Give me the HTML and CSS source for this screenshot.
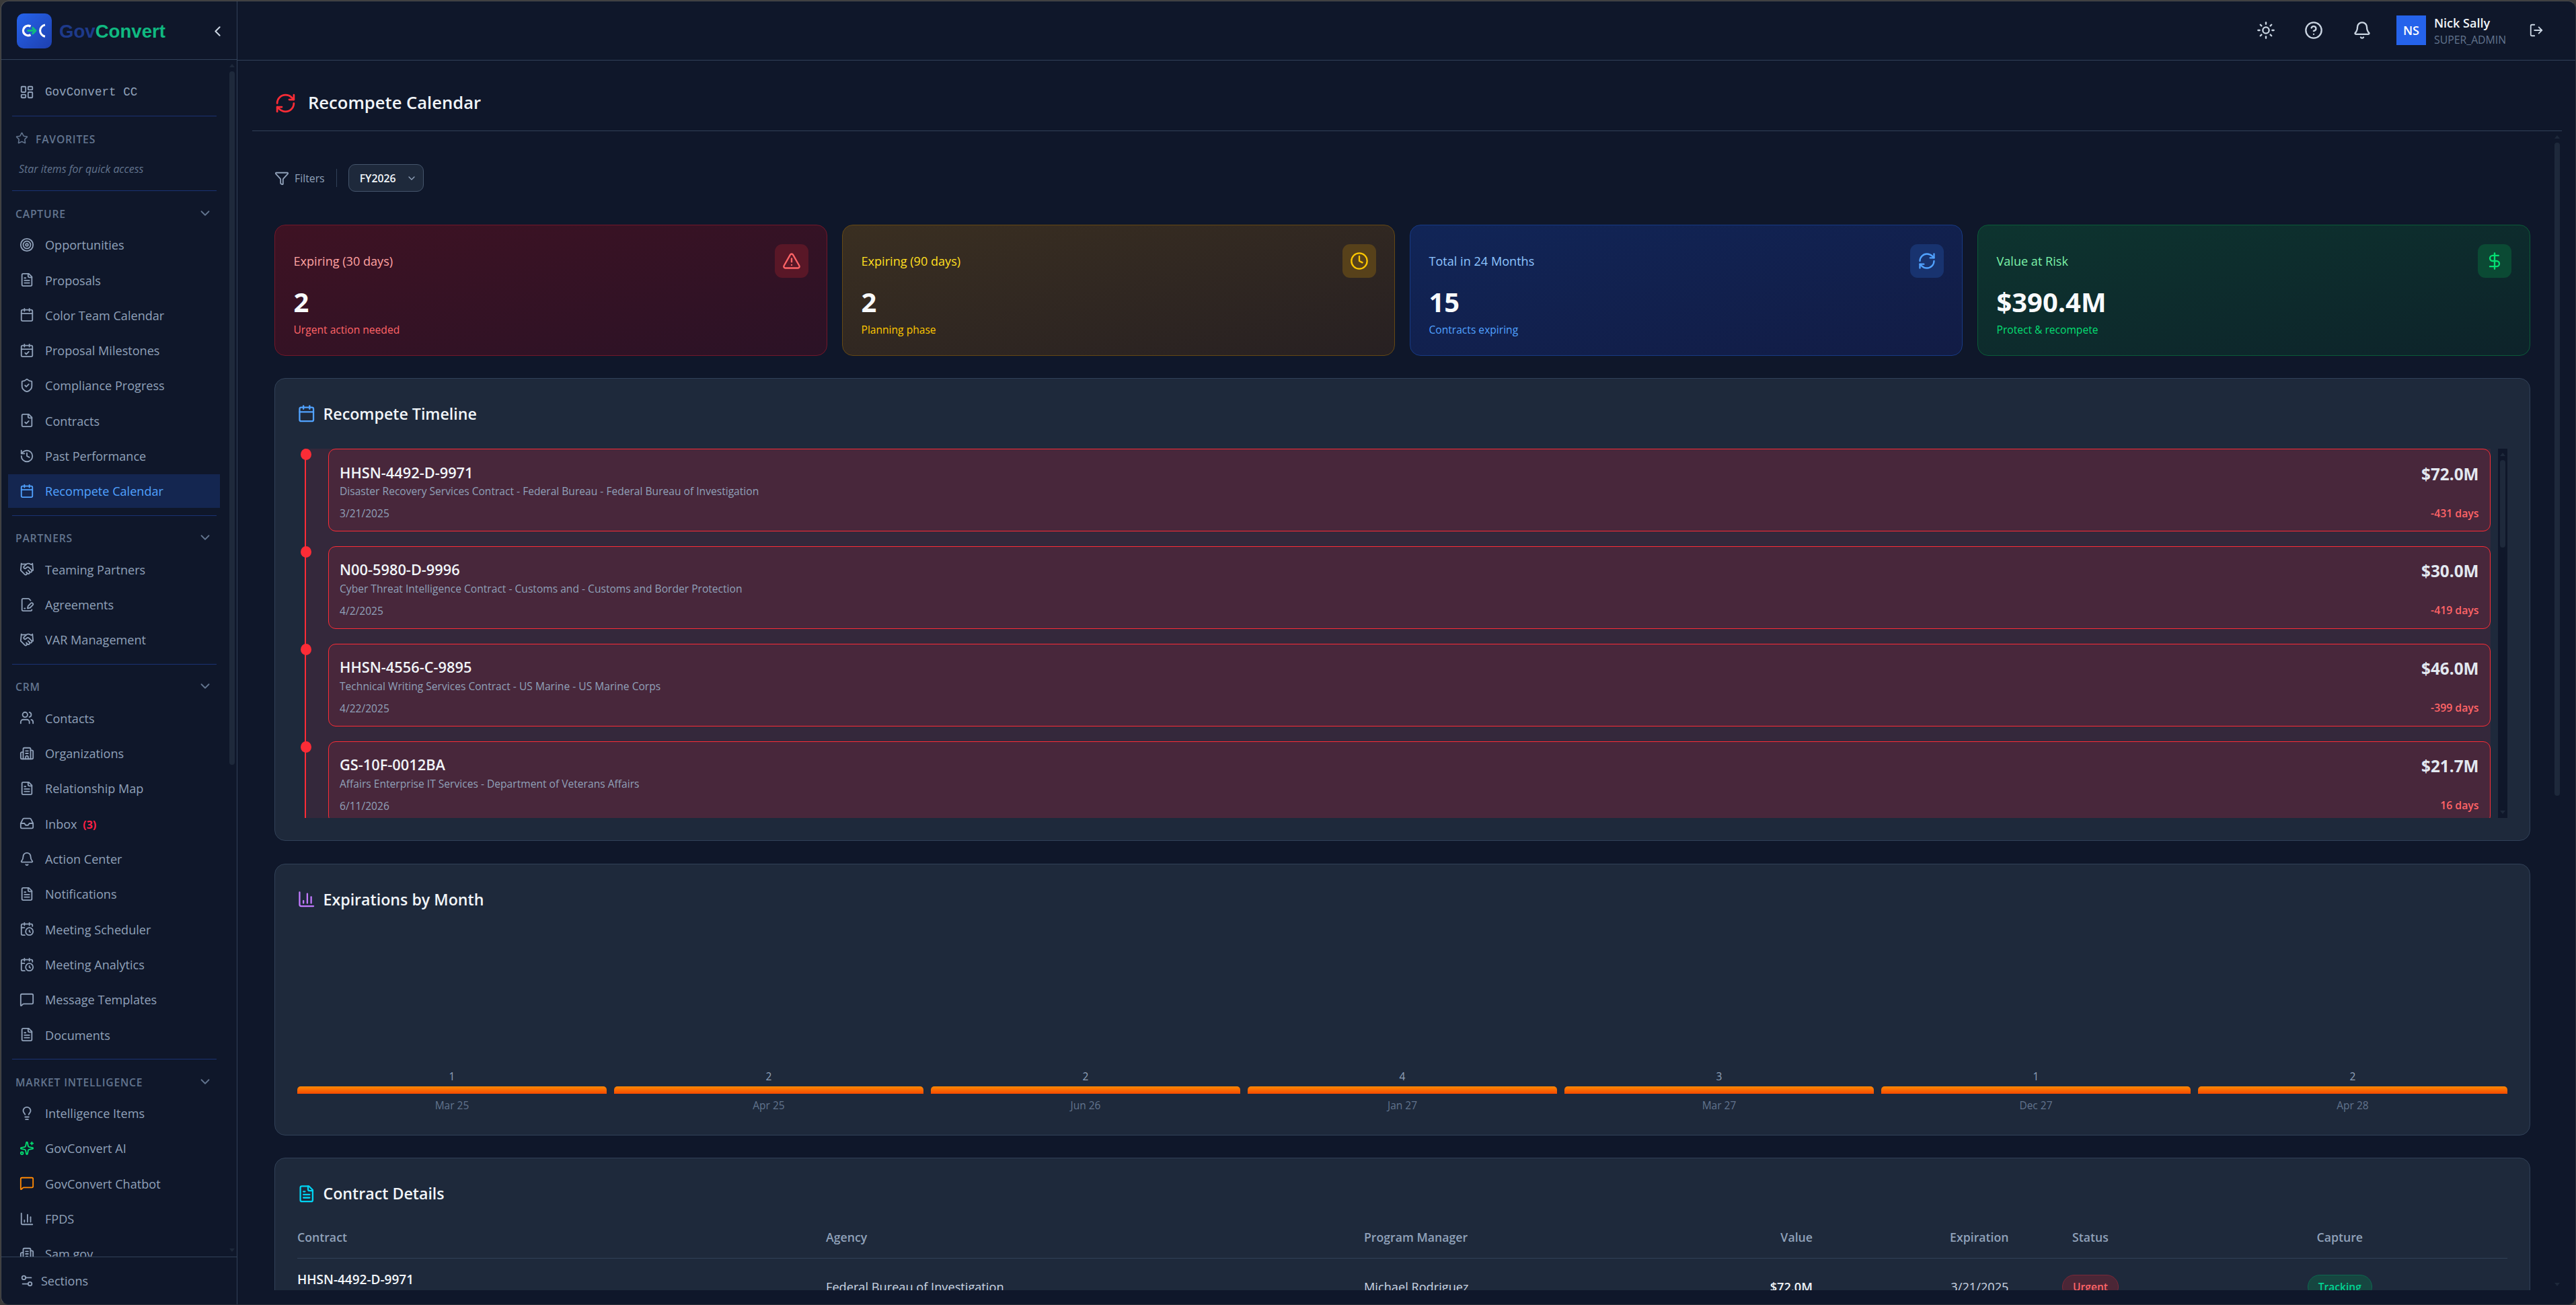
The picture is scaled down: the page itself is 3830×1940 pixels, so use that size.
FILE: index.html
```html
<!DOCTYPE html>
<html lang="en">
<head>
  <meta charset="UTF-8" />
  <meta name="viewport" content="width=device-width, initial-scale=1.0"/>
  <title>Recompete Calendar - GovConvert</title>
  <link rel="stylesheet" href="styles.css">
</head>
<body>
  <svg class="sprite" xmlns="http://www.w3.org/2000/svg">
    <symbol id="dashboard" viewBox="0 0 24 24"><rect width="7" height="9" x="3" y="3" rx="1"/><rect width="7" height="5" x="14" y="3" rx="1"/><rect width="7" height="9" x="14" y="12" rx="1"/><rect width="7" height="5" x="3" y="16" rx="1"/></symbol>
    <symbol id="star" viewBox="0 0 24 24"><path d="M11.525 2.295a.53.53 0 0 1 .95 0l2.31 4.679a2.123 2.123 0 0 0 1.595 1.16l5.166.756a.53.53 0 0 1 .294.904l-3.736 3.638a2.123 2.123 0 0 0-.611 1.878l.882 5.14a.53.53 0 0 1-.771.56l-4.618-2.428a2.122 2.122 0 0 0-1.973 0L6.396 21.01a.53.53 0 0 1-.77-.56l.881-5.139a2.122 2.122 0 0 0-.611-1.879L2.16 9.795a.53.53 0 0 1 .294-.906l5.165-.755a2.122 2.122 0 0 0 1.597-1.16z"/></symbol>
    <symbol id="target" viewBox="0 0 24 24"><circle cx="12" cy="12" r="10"/><circle cx="12" cy="12" r="6"/><circle cx="12" cy="12" r="2"/></symbol>
    <symbol id="file-text" viewBox="0 0 24 24"><path d="M15 2H6a2 2 0 0 0-2 2v16a2 2 0 0 0 2 2h12a2 2 0 0 0 2-2V7Z"/><path d="M14 2v4a2 2 0 0 0 2 2h4"/><path d="M10 9H8"/><path d="M16 13H8"/><path d="M16 17H8"/></symbol>
    <symbol id="file-check" viewBox="0 0 24 24"><path d="M15 2H6a2 2 0 0 0-2 2v16a2 2 0 0 0 2 2h12a2 2 0 0 0 2-2V7Z"/><path d="M14 2v4a2 2 0 0 0 2 2h4"/><path d="m9 15 2 2 4-4"/></symbol>
    <symbol id="file-pen" viewBox="0 0 24 24"><path d="m18 5-2.414-2.414A2 2 0 0 0 14.172 2H6a2 2 0 0 0-2 2v16a2 2 0 0 0 2 2h12a2 2 0 0 0 2-2"/><path d="M21.378 12.626a1 1 0 0 0-3.004-3.004l-4.01 4.012a2 2 0 0 0-.506.854l-.837 2.87a.5.5 0 0 0 .62.62l2.87-.837a2 2 0 0 0 .854-.506z"/><path d="M8 18h1"/></symbol>
    <symbol id="calendar" viewBox="0 0 24 24"><path d="M8 2v4"/><path d="M16 2v4"/><rect width="18" height="18" x="3" y="4" rx="2"/><path d="M3 10h18"/></symbol>
    <symbol id="calendar-check" viewBox="0 0 24 24"><path d="M8 2v4"/><path d="M16 2v4"/><rect width="18" height="18" x="3" y="4" rx="2"/><path d="M3 10h18"/><path d="m9 16 2 2 4-4"/></symbol>
    <symbol id="calendar-clock" viewBox="0 0 24 24"><path d="M16 14v2.2l1.6 1"/><path d="M16 2v4"/><path d="M21 7.5V6a2 2 0 0 0-2-2H5a2 2 0 0 0-2 2v14a2 2 0 0 0 2 2h3.5"/><path d="M3 10h5"/><path d="M8 2v4"/><circle cx="16" cy="16" r="6"/></symbol>
    <symbol id="shield" viewBox="0 0 24 24"><path d="M20 13c0 5-3.5 7.5-7.66 8.95a1 1 0 0 1-.67-.01C7.5 20.5 4 18 4 13V6a1 1 0 0 1 1-1c2 0 4.5-1.2 6.24-2.72a1.17 1.17 0 0 1 1.52 0C14.51 3.81 17 5 19 5a1 1 0 0 1 1 1z"/><path d="m9 12 2 2 4-4"/></symbol>
    <symbol id="history" viewBox="0 0 24 24"><path d="M3 12a9 9 0 1 0 9-9 9.75 9.75 0 0 0-6.74 2.74L3 8"/><path d="M3 3v5h5"/><path d="M12 7v5l4 2"/></symbol>
    <symbol id="handshake" viewBox="0 0 24 24"><path d="m11 17 2 2a1 1 0 1 0 3-3"/><path d="m14 14 2.5 2.5a1 1 0 1 0 3-3l-3.88-3.88a3 3 0 0 0-4.24 0l-.88.88a1 1 0 1 1-3-3l2.81-2.81a5.79 5.79 0 0 1 7.06-.87l.47.28a2 2 0 0 0 1.42.25L21 4"/><path d="m21 3 1 11h-2"/><path d="M3 3 2 14l6.5 6.5a1 1 0 1 0 3-3"/><path d="M3 4h8"/></symbol>
    <symbol id="users" viewBox="0 0 24 24"><path d="M16 21v-2a4 4 0 0 0-4-4H6a4 4 0 0 0-4 4v2"/><circle cx="9" cy="7" r="4"/><path d="M22 21v-2a4 4 0 0 0-3-3.87"/><path d="M16 3.13a4 4 0 0 1 0 7.75"/></symbol>
    <symbol id="building" viewBox="0 0 24 24"><path d="M10 12h4"/><path d="M10 8h4"/><path d="M14 21v-3a2 2 0 0 0-4 0v3"/><path d="M6 10H4a2 2 0 0 0-2 2v7a2 2 0 0 0 2 2h16a2 2 0 0 0 2-2V9a2 2 0 0 0-2-2h-2"/><path d="M6 21V5a2 2 0 0 1 2-2h8a2 2 0 0 1 2 2v16"/></symbol>
    <symbol id="inbox" viewBox="0 0 24 24"><path d="M22 12h-6l-2 3h-4l-2-3H2"/><path d="M5.45 5.11 2 12v6a2 2 0 0 0 2 2h16a2 2 0 0 0 2-2v-6l-3.45-6.89A2 2 0 0 0 16.76 4H7.24a2 2 0 0 0-1.79 1.11z"/></symbol>
    <symbol id="bell" viewBox="0 0 24 24"><path d="M10.268 21a2 2 0 0 0 3.464 0"/><path d="M3.262 15.326A1 1 0 0 0 4 17h16a1 1 0 0 0 .74-1.673C19.41 13.956 18 12.499 18 8A6 6 0 0 0 6 8c0 4.499-1.411 5.956-2.738 7.326"/></symbol>
    <symbol id="message" viewBox="0 0 24 24"><path d="M22 17a2 2 0 0 1-2 2H6.828a2 2 0 0 0-1.414.586l-2.202 2.202A.71.71 0 0 1 2 21.286V5a2 2 0 0 1 2-2h16a2 2 0 0 1 2 2z"/></symbol>
    <symbol id="bulb" viewBox="0 0 24 24"><path d="M15 14c.2-1 .7-1.7 1.5-2.5 1-.9 1.5-2.2 1.5-3.5A6 6 0 0 0 6 8c0 1 .2 2.2 1.5 3.5.7.7 1.3 1.5 1.5 2.5"/><path d="M9 18h6"/><path d="M10 22h4"/></symbol>
    <symbol id="sparkles" viewBox="0 0 24 24"><path d="M11.017 2.814a1 1 0 0 1 1.966 0l1.051 5.558a2 2 0 0 0 1.594 1.594l5.558 1.051a1 1 0 0 1 0 1.966l-5.558 1.051a2 2 0 0 0-1.594 1.594l-1.051 5.558a1 1 0 0 1-1.966 0l-1.051-5.558a2 2 0 0 0-1.594-1.594l-5.558-1.051a1 1 0 0 1 0-1.966l5.558-1.051a2 2 0 0 0 1.594-1.594z"/><path d="M20 2v4"/><path d="M22 4h-4"/><circle cx="4" cy="20" r="2"/></symbol>
    <symbol id="chart" viewBox="0 0 24 24"><path d="M3 3v16a2 2 0 0 0 2 2h16"/><path d="M18 17V9"/><path d="M13 17V5"/><path d="M8 17v-3"/></symbol>
    <symbol id="settings" viewBox="0 0 24 24"><path d="M14 17H5"/><path d="M19 7h-9"/><circle cx="17" cy="17" r="3"/><circle cx="7" cy="7" r="3"/></symbol>
    <symbol id="sun" viewBox="0 0 24 24"><circle cx="12" cy="12" r="4"/><path d="M12 2v2"/><path d="M12 20v2"/><path d="m4.93 4.93 1.41 1.41"/><path d="m17.66 17.66 1.41 1.41"/><path d="M2 12h2"/><path d="M20 12h2"/><path d="m6.34 17.66-1.41 1.41"/><path d="m19.07 4.93-1.41 1.41"/></symbol>
    <symbol id="help" viewBox="0 0 24 24"><circle cx="12" cy="12" r="10"/><path d="M9.09 9a3 3 0 0 1 5.83 1c0 2-3 3-3 3"/><path d="M12 17h.01"/></symbol>
    <symbol id="logout" viewBox="0 0 24 24"><path d="m16 17 5-5-5-5"/><path d="M21 12H9"/><path d="M9 21H5a2 2 0 0 1-2-2V5a2 2 0 0 1 2-2h4"/></symbol>
    <symbol id="refresh" viewBox="0 0 24 24"><path d="M3 12a9 9 0 0 1 9-9 9.75 9.75 0 0 1 6.74 2.74L21 8"/><path d="M21 3v5h-5"/><path d="M21 12a9 9 0 0 1-9 9 9.75 9.75 0 0 1-6.74-2.74L3 16"/><path d="M8 16H3v5"/></symbol>
    <symbol id="funnel" viewBox="0 0 24 24"><path d="M10 20a1 1 0 0 0 .553.895l2 1A1 1 0 0 0 14 21v-7a2 2 0 0 1 .517-1.341L21.74 4.67A1 1 0 0 0 21 3H3a1 1 0 0 0-.742 1.67l7.225 7.989A2 2 0 0 1 10 14z"/></symbol>
    <symbol id="alert" viewBox="0 0 24 24"><path d="m21.73 18-8-14a2 2 0 0 0-3.48 0l-8 14A2 2 0 0 0 4 21h16a2 2 0 0 0 1.73-3"/><path d="M12 9v4"/><path d="M12 17h.01"/></symbol>
    <symbol id="clock" viewBox="0 0 24 24"><circle cx="12" cy="12" r="10"/><path d="M12 6v6l4 2"/></symbol>
    <symbol id="dollar" viewBox="0 0 24 24"><path d="M12 2v20"/><path d="M17 5H9.5a3.5 3.5 0 0 0 0 7h5a3.5 3.5 0 0 1 0 7H6"/></symbol>
    <symbol id="down" viewBox="0 0 24 24"><path d="m6 9 6 6 6-6"/></symbol>
    <symbol id="left" viewBox="0 0 24 24"><path d="m15 18-6-6 6-6"/></symbol>
  </svg>

  <div class="app">
    <aside class="sidebar">
      <div class="brand">
        <svg class="logo" viewBox="0 0 52 52">
          <defs>
            <linearGradient id="logo-bg" x1="0" y1="0" x2="1" y2="1">
              <stop offset="0" stop-color="#2563eb"/>
              <stop offset="1" stop-color="#1e40af"/>
            </linearGradient>
          </defs>
          <rect width="52" height="52" rx="10" fill="url(#logo-bg)"/>
          <path d="M20.5 19.2A7.3 7.3 0 1 0 20.5 31.8" stroke="#fff" stroke-width="3.4"/>
          <path d="M42 17A8.7 8.7 0 0 0 42 34.2" stroke="#fff" stroke-width="3"/>
          <path d="M15.5 25.6H27.5M22.8 20.6L28 25.6L22.8 30.6" stroke="#10b981" stroke-width="3"/>
        </svg>
        <div class="brand-name"><span>Gov</span>Convert</div>
        <svg class="icon collapse"><use href="#left"/></svg>
      </div>

      <div class="nav-wrap">
        <nav>
          <a class="item home"><svg class="icon"><use href="#dashboard"/></svg>GovConvert CC</a>

          <div class="divider"></div>
          <div class="group-title favorites"><svg class="icon"><use href="#star"/></svg>FAVORITES</div>
          <p class="hint">Star items for quick access</p>

          <div class="divider"></div>
          <div class="group-title">CAPTURE<svg class="icon chevron"><use href="#down"/></svg></div>
          <div class="group">
            <a class="item"><svg class="icon"><use href="#target"/></svg>Opportunities</a>
            <a class="item"><svg class="icon"><use href="#file-text"/></svg>Proposals</a>
            <a class="item"><svg class="icon"><use href="#calendar"/></svg>Color Team Calendar</a>
            <a class="item"><svg class="icon"><use href="#calendar-check"/></svg>Proposal Milestones</a>
            <a class="item"><svg class="icon"><use href="#shield"/></svg>Compliance Progress</a>
            <a class="item"><svg class="icon"><use href="#file-check"/></svg>Contracts</a>
            <a class="item"><svg class="icon"><use href="#history"/></svg>Past Performance</a>
            <a class="item active"><svg class="icon"><use href="#calendar"/></svg>Recompete Calendar</a>
          </div>

          <div class="divider"></div>
          <div class="group-title">PARTNERS<svg class="icon chevron"><use href="#down"/></svg></div>
          <div class="group">
            <a class="item"><svg class="icon"><use href="#handshake"/></svg>Teaming Partners</a>
            <a class="item"><svg class="icon"><use href="#file-pen"/></svg>Agreements</a>
            <a class="item"><svg class="icon"><use href="#handshake"/></svg>VAR Management</a>
          </div>

          <div class="divider"></div>
          <div class="group-title">CRM<svg class="icon chevron"><use href="#down"/></svg></div>
          <div class="group">
            <a class="item"><svg class="icon"><use href="#users"/></svg>Contacts</a>
            <a class="item"><svg class="icon"><use href="#building"/></svg>Organizations</a>
            <a class="item"><svg class="icon"><use href="#file-text"/></svg>Relationship Map</a>
            <a class="item"><svg class="icon"><use href="#inbox"/></svg>Inbox <span class="count">(3)</span></a>
            <a class="item"><svg class="icon"><use href="#bell"/></svg>Action Center</a>
            <a class="item"><svg class="icon"><use href="#file-text"/></svg>Notifications</a>
            <a class="item"><svg class="icon"><use href="#calendar-clock"/></svg>Meeting Scheduler</a>
            <a class="item"><svg class="icon"><use href="#calendar-clock"/></svg>Meeting Analytics</a>
            <a class="item"><svg class="icon"><use href="#message"/></svg>Message Templates</a>
            <a class="item"><svg class="icon"><use href="#file-text"/></svg>Documents</a>
          </div>

          <div class="divider"></div>
          <div class="group-title">MARKET INTELLIGENCE<svg class="icon chevron"><use href="#down"/></svg></div>
          <div class="group">
            <a class="item"><svg class="icon"><use href="#bulb"/></svg>Intelligence Items</a>
            <a class="item"><svg class="icon icon-green"><use href="#sparkles"/></svg>GovConvert AI</a>
            <a class="item"><svg class="icon icon-orange"><use href="#message"/></svg>GovConvert Chatbot</a>
            <a class="item"><svg class="icon"><use href="#chart"/></svg>FPDS</a>
            <a class="item"><svg class="icon"><use href="#building"/></svg>Sam.gov</a>
          </div>
        </nav>
        <div class="scrollbar nav-scroll"><i class="up"></i><b></b><i class="dn"></i></div>
      </div>

      <div class="sections"><svg class="icon"><use href="#settings"/></svg>Sections</div>
    </aside>

    <main>
      <header class="topbar">
        <button><svg class="icon"><use href="#sun"/></svg></button>
        <button><svg class="icon"><use href="#help"/></svg></button>
        <button><svg class="icon"><use href="#bell"/></svg></button>
        <div class="avatar">NS</div>
        <div class="user">
          <strong>Nick Sally</strong>
          <small>SUPER_ADMIN</small>
        </div>
        <svg class="icon logout"><use href="#logout"/></svg>
      </header>

      <div class="page-head">
        <svg class="icon"><use href="#refresh"/></svg>
        <h1>Recompete Calendar</h1>
      </div>

      <div class="page-wrap">
        <div class="page">
          <div class="filters">
            <svg class="icon"><use href="#funnel"/></svg>
            <span>Filters</span>
            <i></i>
            <div class="select">FY2026<svg class="icon"><use href="#down"/></svg></div>
          </div>

          <div class="cards">
            <div class="card red">
              <div class="card-top"><span>Expiring (30 days)</span><div class="badge"><svg class="icon"><use href="#alert"/></svg></div></div>
              <div class="value">2</div>
              <div class="note">Urgent action needed</div>
            </div>
            <div class="card yellow">
              <div class="card-top"><span>Expiring (90 days)</span><div class="badge"><svg class="icon"><use href="#clock"/></svg></div></div>
              <div class="value">2</div>
              <div class="note">Planning phase</div>
            </div>
            <div class="card blue">
              <div class="card-top"><span>Total in 24 Months</span><div class="badge"><svg class="icon"><use href="#refresh"/></svg></div></div>
              <div class="value">15</div>
              <div class="note">Contracts expiring</div>
            </div>
            <div class="card green">
              <div class="card-top"><span>Value at Risk</span><div class="badge"><svg class="icon"><use href="#dollar"/></svg></div></div>
              <div class="value">$390.4M</div>
              <div class="note">Protect &amp; recompete</div>
            </div>
          </div>

          <section class="panel">
            <h2><svg class="icon icon-blue"><use href="#calendar"/></svg>Recompete Timeline</h2>
            <div class="timeline-wrap">
              <div class="timeline">
                <div class="entry">
                  <div class="contract">
                    <div>
                      <h3>HHSN-4492-D-9971</h3>
                      <p>Disaster Recovery Services Contract - Federal Bureau - Federal Bureau of Investigation</p>
                      <time>3/21/2025</time>
                    </div>
                    <div class="amount"><b>$72.0M</b><span>-431 days</span></div>
                  </div>
                </div>
                <div class="entry">
                  <div class="contract">
                    <div>
                      <h3>N00-5980-D-9996</h3>
                      <p>Cyber Threat Intelligence Contract - Customs and - Customs and Border Protection</p>
                      <time>4/2/2025</time>
                    </div>
                    <div class="amount"><b>$30.0M</b><span>-419 days</span></div>
                  </div>
                </div>
                <div class="entry">
                  <div class="contract">
                    <div>
                      <h3>HHSN-4556-C-9895</h3>
                      <p>Technical Writing Services Contract - US Marine - US Marine Corps</p>
                      <time>4/22/2025</time>
                    </div>
                    <div class="amount"><b>$46.0M</b><span>-399 days</span></div>
                  </div>
                </div>
                <div class="entry">
                  <div class="contract">
                    <div>
                      <h3>GS-10F-0012BA</h3>
                      <p>Affairs Enterprise IT Services - Department of Veterans Affairs</p>
                      <time>6/11/2026</time>
                    </div>
                    <div class="amount"><b>$21.7M</b><span>16 days</span></div>
                  </div>
                </div>
              </div>
              <div class="scrollbar timeline-scroll"><i class="up"></i><b></b><i class="dn"></i></div>
            </div>
          </section>

          <section class="panel">
            <h2><svg class="icon icon-purple"><use href="#chart"/></svg>Expirations by Month</h2>
            <div class="chart">
              <div class="month"><span>1</span><i></i><small>Mar 25</small></div>
              <div class="month"><span>2</span><i></i><small>Apr 25</small></div>
              <div class="month"><span>2</span><i></i><small>Jun 26</small></div>
              <div class="month"><span>4</span><i></i><small>Jan 27</small></div>
              <div class="month"><span>3</span><i></i><small>Mar 27</small></div>
              <div class="month"><span>1</span><i></i><small>Dec 27</small></div>
              <div class="month"><span>2</span><i></i><small>Apr 28</small></div>
            </div>
          </section>

          <section class="panel details">
            <h2><svg class="icon icon-cyan"><use href="#file-text"/></svg>Contract Details</h2>
            <div class="row head">
              <div>Contract</div>
              <div>Agency</div>
              <div>Program Manager</div>
              <div class="right">Value</div>
              <div class="right">Expiration</div>
              <div class="center">Status</div>
              <div class="center">Capture</div>
            </div>
            <div class="row">
              <div class="name">HHSN-4492-D-9971</div>
              <div>Federal Bureau of Investigation</div>
              <div>Michael Rodriguez</div>
              <div class="right money">$72.0M</div>
              <div class="right">3/21/2025</div>
              <div class="center"><span class="pill urgent">Urgent</span></div>
              <div class="center"><span class="pill tracking">Tracking</span></div>
            </div>
          </section>
        </div>
        <div class="scrollbar page-scroll"><i class="up"></i><b></b><i class="dn"></i></div>
      </div>
    </main>
  </div>
</body>
</html>
```
FILE: styles.css
```css
* {
  box-sizing: border-box;
}
html, body {
  height: 100%;
}
body {
  margin: 0;
  padding: 1px 0 0 1px;
  background: #3a3a3a;
  font-family: "Open Sans", "Noto Sans", sans-serif;
  color: #f1f5f9;
  overflow: hidden;
}
h1, h2, h3, p {
  margin: 0;
}
.sprite {
  display: none;
}
.icon {
  width: 22px;
  height: 22px;
  flex: none;
  fill: none;
  stroke: currentColor;
  stroke-width: 2;
  stroke-linecap: round;
  stroke-linejoin: round;
}
.app {
  display: flex;
  height: 1939px;
  background: #0f172a;
  border: 1px solid #4d4e50;
  border-right-color: #2b303b;
  border-bottom-color: #2b303b;
  border-radius: 12px;
  overflow: hidden;
}

/* scrollbars */
.scrollbar {
  display: flex;
  flex-direction: column;
  align-items: center;
  width: 14px;
  flex: none;
}
.scrollbar b {
  width: 8px;
  border-radius: 4px;
  background: #1e293b;
}
.scrollbar i {
  border: 4px solid transparent;
  border-top: 0;
  border-bottom: 5px solid #1e293b;
}
.scrollbar .dn {
  border-bottom: 0;
  border-top: 5px solid #1e293b;
  margin-top: auto;
}

/* sidebar */
.sidebar {
  width: 351px;
  flex: none;
  display: flex;
  flex-direction: column;
  border-right: 1px solid #314158;
}
.brand {
  height: 87px;
  flex: none;
  display: flex;
  align-items: center;
  padding: 0 16px 0 23px;
  border-bottom: 1px solid #314158;
}
.logo {
  width: 52px;
  height: 52px;
  fill: none;
  stroke-linejoin: round;
  margin-top: 2px;
}
.brand-name {
  font: bold 27.6px "Liberation Sans", Arial, sans-serif;
  color: #10b981;
  margin: 3px 0 0 11px;
}
.brand-name span {
  color: #1e3a8a;
}
.collapse {
  width: 25px;
  height: 25px;
  margin-left: auto;
  margin-top: 2px;
  color: #cad5e2;
}
.nav-wrap {
  flex: 1;
  min-height: 0;
  display: flex;
  overflow: hidden;
}
nav {
  flex: 1;
  padding: 22px 11px 0 10px;
}
.item {
  display: flex;
  align-items: center;
  height: 50px;
  margin-bottom: 2.33px;
  padding: 1px 0 0 17px;
  font-size: 18.1px;
  color: #90a1b9;
  white-space: pre;
}
.item .icon {
  margin-right: 16px;
  margin-top: -1px;
}
.home {
  font: 17.6px "Liberation Mono", monospace;
  margin-bottom: 11px;
  padding-top: 2px;
}
.active {
  background: #142650;
  color: #51a2ff;
}
.count {
  font-size: 16px;
  font-weight: 700;
  color: #ff2045;
  margin: 2px 0 0 4px;
}
.icon-green {
  color: #05df72;
}
.icon-orange {
  color: #ff8904;
}
.divider {
  height: 1px;
  margin: 0 5px 0 6px;
  background: #1a3273;
}
.group-title {
  display: flex;
  align-items: center;
  justify-content: space-between;
  height: 54.7px;
  padding: 13px 11px 0 11px;
  font-size: 15.7px;
  font-weight: 600;
  letter-spacing: 0.8px;
  color: #62748e;
}
.group-title .icon {
  margin-top: -2px;
}
.favorites {
  justify-content: flex-start;
  gap: 11px;
}
.favorites .icon {
  width: 19px;
  height: 19px;
}
.hint {
  height: 55.3px;
  padding: 11px 0 0 16px;
  font-size: 15.9px;
  font-style: italic;
  line-height: 24px;
  color: #62748e;
}
.group {
  padding-bottom: 8.3px;
}
.nav-scroll {
  padding: 6px 0 7px;
}
.nav-scroll b {
  height: 1031px;
  margin-top: 6px;
}
.sections {
  height: 71px;
  flex: none;
  display: flex;
  align-items: center;
  gap: 10px;
  padding: 0 0 0 27px;
  border-top: 1px solid #314158;
  font-size: 18px;
  color: #90a1b9;
}

/* main */
main {
  flex: 1;
  min-width: 0;
  display: flex;
  flex-direction: column;
}
.topbar {
  height: 88px;
  flex: none;
  display: flex;
  align-items: center;
  justify-content: flex-end;
  padding: 0 47px 2px 0;
  border-bottom: 1px solid #314158;
}
.topbar button {
  width: 50px;
  height: 50px;
  margin-right: 21.5px;
  padding: 0;
  border: none;
  background: none;
  color: #cad5e2;
  display: flex;
  align-items: center;
  justify-content: center;
}
.topbar button .icon {
  width: 28px;
  height: 28px;
}
.avatar {
  width: 44px;
  height: 44px;
  margin: 0 12px 0 5px;
  background: #2563eb;
  color: #fff;
  font-size: 18px;
  font-weight: 600;
  line-height: 45px;
  text-align: center;
}
.user {
  width: 108px;
  margin: 4px 33px 0 0;
}
.user strong, .user small {
  display: block;
  font-size: 18px;
  font-weight: 600;
  line-height: 26px;
  white-space: nowrap;
}
.user small {
  font-size: 15.8px;
  font-weight: 400;
  line-height: 25px;
  color: #62748e;
}
.logout {
  color: #cad5e2;
}
.page-head {
  height: 105px;
  flex: none;
  display: flex;
  align-items: center;
  gap: 17px;
  margin: 0 20px 0 22px;
  padding: 22px 0 0 33px;
  border-bottom: 1px solid #314158;
}
.page-head .icon {
  width: 33px;
  height: 33px;
  color: #fb2c36;
}
.page-head h1 {
  font-size: 25.6px;
  font-weight: 600;
  line-height: 36px;
}
.page-wrap {
  display: flex;
  height: 1723px;
  margin: 0 20px 0 22px;
  overflow: hidden;
}
.page {
  flex: 1;
  min-width: 0;
  padding: 49px 33px 0 33px;
}
.page-scroll {
  padding: 6px 0 6px;
}
.page-scroll b {
  height: 971px;
  margin-top: 6px;
}

.filters {
  display: flex;
  align-items: center;
  height: 41px;
  margin-bottom: 49px;
  color: #90a1b9;
  font-size: 15.8px;
  font-weight: 500;
}
.filters span {
  margin: 0 17px 0 8px;
}
.filters > i {
  width: 1px;
  height: 27px;
  margin-right: 17px;
  background: #314158;
}
.select {
  display: flex;
  align-items: center;
  justify-content: space-between;
  width: 112px;
  height: 41px;
  padding: 0 9px 0 16px;
  background: #1e293b;
  border: 1px solid #45556c;
  border-radius: 10px;
  color: #f1f5f9;
  font-weight: 600;
}
.select .icon {
  width: 16px;
  height: 16px;
  color: #90a1b9;
}

/* summary cards */
.cards {
  display: grid;
  grid-template-columns: repeat(4, 1fr);
  gap: 22px;
  margin-bottom: 33px;
}
.card {
  height: 195px;
  padding: 28px 27.5px;
  border: 1px solid;
  border-radius: 16px;
}
.card-top {
  display: flex;
  align-items: center;
  justify-content: space-between;
  height: 50px;
  font-size: 18.1px;
}
.badge {
  display: flex;
  align-items: center;
  justify-content: center;
  width: 50px;
  height: 50px;
  border-radius: 11px;
}
.badge .icon {
  width: 28px;
  height: 28px;
}
.value {
  margin: 14px 0 8px;
  font-size: 39.9px;
  font-weight: 700;
  line-height: 44px;
  color: #f8fafc;
}
.note {
  font-size: 15.6px;
  line-height: 23px;
}
.red {
  background: linear-gradient(to bottom right, #3e1223, #2b1226);
  border-color: #731729;
  color: #ff6467;
}
.red .card-top span { color: #ffa2a2; }
.red .badge { background: #591727; }
.yellow {
  background: linear-gradient(to bottom right, #3a2f21, #272022);
  border-color: #654813;
  color: #fdc700;
}
.yellow .card-top span { color: #ffdf20; }
.yellow .badge { background: #57411a; }
.blue {
  background: linear-gradient(to bottom right, #112557, #121c45);
  border-color: #173a84;
  color: #51a2ff;
}
.blue .card-top span { color: #8ec5ff; }
.blue .badge { background: #18336f; }
.green {
  background: linear-gradient(to bottom right, #0d342f, #0d232a);
  border-color: #0a5b38;
  color: #05df72;
}
.green .card-top span { color: #7bf1a8; }
.green .badge { background: #0b4a34; }

/* panels */
.panel {
  padding: 36px 33px 33px;
  margin-bottom: 33.5px;
  background: #1e293b;
  border: 1px solid #314158;
  border-radius: 16px;
}
.panel h2 {
  display: flex;
  align-items: center;
  gap: 11px;
  height: 32px;
  margin-bottom: 36px;
  font-size: 23.2px;
  font-weight: 600;
  line-height: 34px;
}
.panel h2 .icon {
  width: 27.5px;
  height: 27.5px;
}
.icon-blue { color: #51a2ff; }
.icon-purple { color: #c27aff; }
.icon-cyan { color: #00d3f2; }

.timeline-wrap {
  display: flex;
  height: 549.3px;
  overflow: hidden;
}
.timeline {
  flex: 1;
  margin: 0 11px;
}
.entry {
  position: relative;
  height: 144.95px;
  padding: 0 0 22.3px 33px;
  border-left: 2px solid #fb2c36;
  background: rgba(251, 44, 54, 0.1);
}
.entry::before {
  content: "";
  position: absolute;
  left: -8px;
  top: 0;
  width: 16px;
  height: 17px;
  border-radius: 50%;
  background: #fb2c36;
}
.contract {
  display: flex;
  justify-content: space-between;
  height: 100%;
  padding: 19.5px 16.5px 0 16px;
  border: 1px solid #fb2c36;
  border-radius: 11px;
  background: rgba(251, 44, 54, 0.1);
}
.contract h3 {
  font-size: 21.8px;
  font-weight: 600;
  line-height: 29px;
}
.contract p, .contract time {
  display: block;
  margin-top: 2.5px;
  font-size: 15.6px;
  line-height: 22px;
  color: #90a1b9;
}
.contract time {
  margin-top: 11px;
}
.amount {
  text-align: right;
  color: #e2e8f0;
}
.amount b {
  display: block;
  font-size: 24.3px;
  line-height: 34px;
}
.amount span {
  display: block;
  margin-top: 30px;
  font-size: 15.8px;
  font-weight: 600;
  line-height: 22px;
  color: #ff6467;
}
.timeline-scroll {
  background: #0f172a;
  padding: 6px 0 6px;
}
.timeline-scroll b {
  height: 130px;
  margin-top: 6px;
}

.chart {
  display: flex;
  align-items: flex-end;
  gap: 11px;
  height: 265px;
}
.month {
  flex: 1;
  text-align: center;
  font-size: 15.5px;
  line-height: 22px;
  color: #90a1b9;
}
.month i {
  display: block;
  height: 11px;
  margin: 4px 0 7px;
  border-radius: 5px 5px 0 0;
  background: linear-gradient(#ff8904, #f54900);
}
.month small {
  display: block;
  font-size: 15.5px;
  line-height: 21px;
  color: #62748e;
}
.month span {
  display: block;
}

/* contract table */
.details h2 {
  margin-bottom: 18px;
}
.row {
  display: grid;
  grid-template-columns: 786px 800px 400px 267px 291.5px 243px 1fr;
  align-items: center;
  height: 83px;
  font-size: 18.2px;
  color: #cad5e2;
}
.head {
  height: 63px;
  border-bottom: 1px solid #314158;
  font-size: 17.7px;
  font-weight: 600;
  color: #90a1b9;
}
.right { text-align: right; }
.center { text-align: center; }
.name {
  padding-bottom: 22px;
  font-size: 19px;
  font-weight: 600;
  color: #f1f5f9;
}
.money {
  font-weight: 600;
  color: #f1f5f9;
}
.pill {
  display: inline-block;
  padding: 0 15px;
  border: 1px solid;
  border-radius: 18px;
  font-size: 15.6px;
  font-weight: 600;
  line-height: 34px;
}
.urgent {
  background: #4b2636;
  border-color: #7c2838;
  color: #ff6467;
}
.tracking {
  background: #164640;
  border-color: #0d6850;
  color: #00d492;
}
```
